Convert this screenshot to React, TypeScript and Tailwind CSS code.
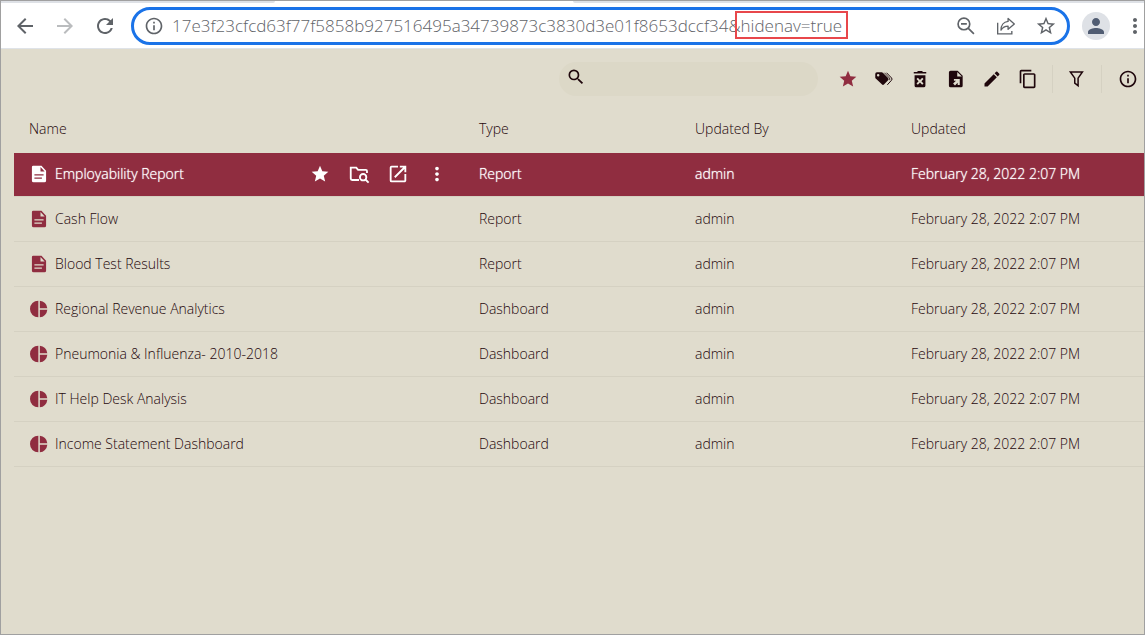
import type { ReactNode } from 'react';
import {
  MdArrowBack,
  MdArrowForward,
  MdContentCopy,
  MdEdit,
  MdInfoOutline,
  MdMoreVert,
  MdOpenInNew,
  MdPerson,
  MdRefresh,
  MdSearch,
  MdStar,
  MdStarBorder,
} from 'react-icons/md';

type ItemType = 'Report' | 'Dashboard';

interface Item {
  name: string;
  type: ItemType;
  updatedBy: string;
  updated: string;
}

const URL_TEXT = '17e3f23cfcd63f77f5858b927516495a34739873c3830d3e01f8653dccf34&hidenav=true';

const items: Item[] = [
  { name: 'Employability Report', type: 'Report', updatedBy: 'admin', updated: 'February 28, 2022 2:07 PM' },
  { name: 'Cash Flow', type: 'Report', updatedBy: 'admin', updated: 'February 28, 2022 2:07 PM' },
  { name: 'Blood Test Results', type: 'Report', updatedBy: 'admin', updated: 'February 28, 2022 2:07 PM' },
  { name: 'Regional Revenue Analytics', type: 'Dashboard', updatedBy: 'admin', updated: 'February 28, 2022 2:07 PM' },
  { name: 'Pneumonia & Influenza- 2010-2018', type: 'Dashboard', updatedBy: 'admin', updated: 'February 28, 2022 2:07 PM' },
  { name: 'IT Help Desk Analysis', type: 'Dashboard', updatedBy: 'admin', updated: 'February 28, 2022 2:07 PM' },
  { name: 'Income Statement Dashboard', type: 'Dashboard', updatedBy: 'admin', updated: 'February 28, 2022 2:07 PM' },
];

const ReportIcon = () => (
  <svg viewBox="0 0 24 24" className="size-5 shrink-0" fill="currentColor" fillRule="evenodd">
    <path d="M5 2h10l5.500 6v12a2 2 0 0 1-2 2H5.500a2 2 0 0 1-2-2V3.500A1.500 1.500 0 0 1 5 2zM13.800 3.500V9h5zM6.500 12.200v1.500h11V12.200zM6.500 16.200v1.500h9V16.200z" />
  </svg>
);

const DashboardIcon = () => (
  <svg viewBox="0 0 24 24" className="size-5 shrink-0" fill="currentColor">
    <path d="M11.200 2v20a10 10 0 0 1 0-20zM13 2a10 10 0 0 1 9 9h-9zM13 13h9a10 10 0 0 1-9 9z" />
  </svg>
);

const TagsIcon = () => (
  <svg viewBox="0 0 24 24" className="size-5" fill="currentColor" fillRule="evenodd">
    <path d="M1.500 6a2 2 0 0 1 2-2h5.700a2 2 0 0 1 1.400.6l6.300 6.200a2 2 0 0 1 0 2.800l-4.700 4.800a2 2 0 0 1-2.800 0L2.100 11.500a2 2 0 0 1-.6-1.400zM5 6a1.500 1.500 0 1 0 0 3 1.500 1.500 0 0 0 0-3z" />
    <path d="M15 4.500l6 6.200a2 2 0 0 1 0 2.800L16 19" fill="none" stroke="currentColor" strokeWidth="1.200" />
    <path d="M12.500 4.500l6 6.300a2 2 0 0 1 0 2.600" fill="none" stroke="currentColor" strokeWidth="1" />
  </svg>
);

const TrashIcon = () => (
  <svg viewBox="0 0 24 24" className="size-5" fill="currentColor" fillRule="evenodd">
    <path d="M4.500 3.500h4l1-1h5l1 1h4v1.800h-15zM5.500 7.500h13V20a2 2 0 0 1-2 2h-9a2 2 0 0 1-2-2zM9.400 10.500l-1.600 1.600 2.500 2.600-2.500 2.600 1.600 1.600 2.600-2.600 2.600 2.600 1.600-1.600-2.500-2.600 2.500-2.600-1.600-1.600-2.600 2.600z" />
  </svg>
);

const FileExportIcon = () => (
  <svg viewBox="0 0 24 24" className="size-5" fill="currentColor" fillRule="evenodd">
    <path d="M5.500 2H14l6 6v12a2 2 0 0 1-2 2H5.500a2 2 0 0 1-2-2V4a2 2 0 0 1 2-2zM13.500 3.500V9H19zM9.500 12v2.200h2.500L8.500 17.500l2.300 2.300 3.200-3.300v2.700h2.500V12z" />
  </svg>
);

const FilterIcon = () => (
  <svg viewBox="0 0 24 24" className="size-5" fill="none" stroke="currentColor" strokeWidth="1.800">
    <path d="M4 3.500h14.500l-5.200 7.500V20l-4-3v-6z" />
  </svg>
);

const FolderSearchIcon = () => (
  <svg viewBox="0 0 24 24" className="size-[22px]" fill="none" stroke="currentColor" strokeWidth="2">
    <path d="M12 18.500H4.500a1.500 1.500 0 0 1-1.500-1.500V5h6l2 2.500h8.500a1.200 1.200 0 0 1 1.200 1.200V11" />
    <circle cx="16.500" cy="15.500" r="3.500" />
    <path d="M19 18l3.500 3.500" />
  </svg>
);

const ZoomOutIcon = () => (
  <svg viewBox="0 0 24 24" className="size-5" fill="none" stroke="currentColor" strokeWidth="2">
    <circle cx="9.500" cy="9.500" r="7" />
    <path d="M6 9.500h7M14.500 14.500l7 7" />
  </svg>
);

const ShareIcon = () => (
  <svg viewBox="0 0 24 24" className="size-5" fill="none" stroke="currentColor" strokeWidth="1.600">
    <path d="M2 8v13.500h17V18" />
    <path d="M14.500 3l7.500 6.500-7.500 6.500v-3.800c-4 0-6.500 1.400-8.500 4.800 0-5.500 3-10 8.500-10.500z" strokeLinejoin="round" />
  </svg>
);

interface IconButtonProps {
  label: string;
  className?: string;
  children: ReactNode;
}

const IconButton = ({ label, className = 'w-9', children }: IconButtonProps) => (
  <button type="button" aria-label={label} className={`flex h-8 shrink-0 items-center justify-center ${className}`}>
    {children}
  </button>
);

const BrowserBar = () => (
  <header className="border-b border-[#dfe3e8] bg-white">
    <div className="flex h-[2px] justify-between">
      <div className="w-[24%] rounded-br bg-[#dee1e6]" />
      <div className="w-1/2 rounded-bl bg-[#dee1e6]" />
    </div>
    <div className="flex h-[45px] items-center pl-1 text-[#5f6368]">
      <IconButton label="Back" className="w-10"><MdArrowBack className="size-6" /></IconButton>
      <IconButton label="Forward" className="w-10 text-[#babcbe]"><MdArrowForward className="size-6" /></IconButton>
      <IconButton label="Reload" className="w-10"><MdRefresh className="size-6" /></IconButton>
      <div className="relative ml-[6px] flex h-[38px] min-w-0 flex-1 items-center rounded-full border-[3px] border-[#1a73e8] pl-[10px] pr-[1px]">
        <MdInfoOutline className="size-5 shrink-0" />
        <input
          type="text"
          aria-label="Address"
          defaultValue={URL_TEXT}
          className="ml-2 min-w-0 flex-1 bg-transparent font-['Open_Sans',sans-serif] text-[17px] leading-6 font-light outline-none"
        />
        <div className="pointer-events-none absolute top-[1px] left-[601px] h-[28px] w-[113px] border-2 border-[#e8474b]" />
        <IconButton label="Zoom" className="w-10"><ZoomOutIcon /></IconButton>
        <IconButton label="Share" className="w-10"><ShareIcon /></IconButton>
        <IconButton label="Bookmark" className="w-10"><MdStarBorder className="size-[22px]" /></IconButton>
      </div>
      <button type="button" aria-label="Profile" className="ml-3 flex size-7 items-center justify-center rounded-full bg-[#dee1e6] text-[#505c72]">
        <MdPerson className="size-6" />
      </button>
      <IconButton label="Menu" className="ml-4 w-[18px]"><MdMoreVert className="size-6 shrink-0" /></IconButton>
    </div>
  </header>
);

const Toolbar = () => (
  <div className="flex items-center justify-end pt-[13px]">
    <label className="mr-3 flex h-[34px] w-[259px] items-center rounded-full bg-[#dcd8c7] pb-1 pl-[7px]">
      <MdSearch className="size-5 shrink-0" />
      <input type="search" aria-label="Search" className="ml-2 min-w-0 flex-1 bg-transparent outline-none" />
    </label>
    <IconButton label="Favorites"><MdStar className="size-5 text-[#902d40]" /></IconButton>
    <IconButton label="Tags"><TagsIcon /></IconButton>
    <IconButton label="Delete"><TrashIcon /></IconButton>
    <IconButton label="Move"><FileExportIcon /></IconButton>
    <IconButton label="Edit"><MdEdit className="size-5" /></IconButton>
    <IconButton label="Copy"><MdContentCopy className="size-5" /></IconButton>
    <div className="mx-[6px] h-7 w-px bg-[#d5d1c2]" />
    <IconButton label="Filter"><FilterIcon /></IconButton>
    <div className="mr-[10px] ml-[6px] h-7 w-px bg-[#d5d1c2]" />
    <IconButton label="Info" className="w-8"><MdInfoOutline className="size-5" /></IconButton>
  </div>
);

const RowActions = () => (
  <div className="ml-auto flex">
    <IconButton label="Favorite" className="w-[39px]"><MdStar className="size-5" /></IconButton>
    <IconButton label="Preview" className="w-[39px]"><FolderSearchIcon /></IconButton>
    <IconButton label="Open in new window" className="w-[39px]"><MdOpenInNew className="size-[22px]" /></IconButton>
    <IconButton label="More" className="w-[39px]"><MdMoreVert className="size-[22px]" /></IconButton>
  </div>
);

interface ItemRowProps {
  item: Item;
  selected: boolean;
}

const ItemRow = ({ item, selected }: ItemRowProps) => (
  <tr
    className={`border-b border-[#d5d1c2] ${
      selected ? 'h-[43px] bg-[#902d40] text-white [text-shadow:0_0_1px_white]' : 'h-[45px]'
    }`}
  >
    <td className="pr-2 pl-[15px]">
      <div className="flex items-center">
        <span className={selected ? 'text-white' : 'text-[#902d40]'}>
          {item.type === 'Report' ? <ReportIcon /> : <DashboardIcon />}
        </span>
        <span className="ml-[6px]">{item.name}</span>
        {selected && <RowActions />}
      </div>
    </td>
    <td className="px-[15px]">{item.type}</td>
    <td className="px-[15px]">{item.updatedBy}</td>
    <td className="px-[15px]">{item.updated}</td>
  </tr>
);

export default function App() {
  return (
    <div className="flex min-h-screen flex-col border border-[#a0a0a0] bg-[#e0dccd] font-['Open_Sans',sans-serif] text-[14px] leading-5 font-light text-[#1f070c]">
      <BrowserBar />
      <main className="flex-1">
        <Toolbar />
        <div className="pl-[13px]">
          <table className="w-full table-fixed border-collapse text-left">
            <colgroup>
              <col />
              <col className="w-[216px]" />
              <col className="w-[216px]" />
              <col className="w-[248px]" />
            </colgroup>
            <thead>
              <tr className="h-[57px]">
                <th className="px-[15px] pt-2 font-light">Name</th>
                <th className="px-[15px] pt-2 font-light">Type</th>
                <th className="px-[15px] pt-2 font-light">Updated By</th>
                <th className="px-[15px] pt-2 font-light">Updated</th>
              </tr>
            </thead>
            <tbody>
              {items.map((item, index) => (
                <ItemRow key={item.name} item={item} selected={index === 0} />
              ))}
            </tbody>
          </table>
        </div>
      </main>
    </div>
  );
}
